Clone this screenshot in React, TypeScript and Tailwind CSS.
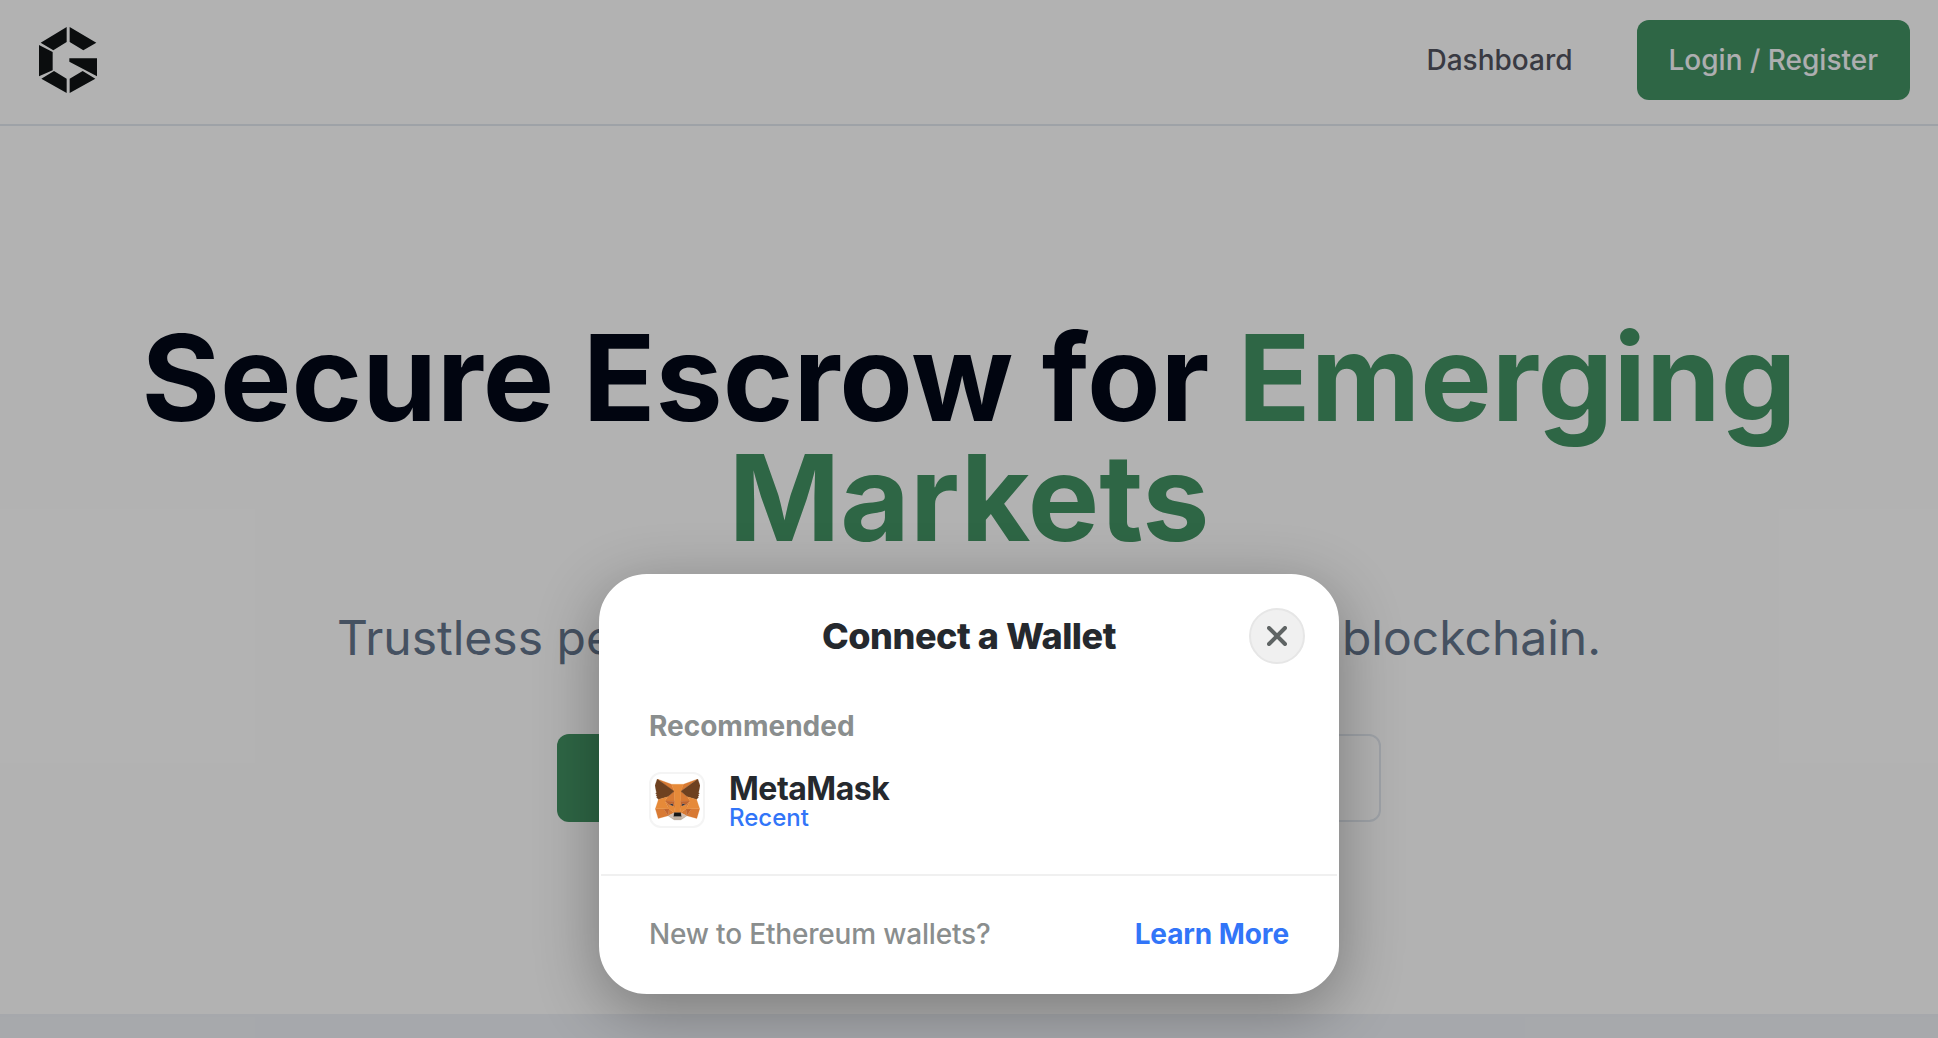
const FOX: [string, string][] = [
  ["#D87A32", "M32.958 1L19.824 10.718l2.442-5.727z"],
  ["#D87A34", "M2.663 1l13.016 9.809-2.32-5.818zM28.23 23.534l-3.495 5.338 7.483 2.06 2.143-7.282zM1.273 23.65l2.13 7.282 7.47-2.06-3.481-5.338zM10.47 14.515l-2.078 3.136 7.405.337-.247-7.97zM25.15 14.515l-5.157-4.588-.169 8.06 7.405-.336zM10.873 28.872l4.482-2.164-3.858-3.006zM20.266 26.708l4.469 2.164-.61-5.17z"],
  ["#D2BFB3", "M24.735 28.872l-4.47-2.164.365 2.903-.04 1.23zM10.873 28.872l4.157 1.97-.026-1.231.351-2.903z"],
  ["#273346", "M15.108 21.784l-3.715-1.088 2.624-1.205zM20.513 21.784l1.09-2.293 2.638 1.205z"],
  ["#C0652F", "M10.873 28.872l.65-5.338-4.131.116zM24.098 23.534l.637 5.338 3.494-5.222zM27.229 17.65l-7.405.338.689 3.796 1.09-2.293 2.638 1.205zM11.393 20.696l2.624-1.205 1.091 2.293.689-3.796-7.405-.337z"],
  ["#D87A34", "M8.392 17.65l3.105 6.052-.104-3.006zM24.241 20.696l-.117 3.006 3.105-6.051zM15.797 17.988l-.689 3.796.87 4.484.196-5.909zM19.824 17.988l-.364 2.358.182 5.922.87-4.484z"],
  ["#E68A39", "M20.513 21.784l-.87 4.484.623.44 3.858-3.006.117-3.006zM11.393 20.696l.104 3.006 3.858 3.006.624-.44-.87-4.484z"],
  ["#BDAD9F", "M20.59 30.842l.04-1.231-.338-.285h-4.963l-.325.285.026 1.23-4.157-1.969 1.455 1.192 2.95 2.035h5.053l2.962-2.035 1.442-1.192z"],
  ["#161616", "M20.266 26.708l-.624-.44h-3.663l-.624.44-.35 2.903.324-.285h4.963l.337.285z"],
  ["#6E4120", "M33.517 11.353l1.104-5.364L32.958 1 20.266 10.394l4.884 4.12 6.899 2.009 1.52-1.775-.663-.48 1.052-.958-.805-.622 1.052-.804zM1 5.989l1.117 5.364-.714.531 1.065.804-.805.622 1.052.958-.663.48 1.52 1.775 6.899-2.008 4.884-4.12L2.663 1z"],
  ["#E68A39", "M32.049 16.523l-6.899-2.008 2.079 3.136-3.105 6.05 4.105-.051h6.132zM10.47 14.515l-6.898 2.008-2.3 7.127h6.12l4.105.052-3.105-6.051zM19.824 17.988l.442-7.594 2-5.403h-8.911l2 5.403.442 7.594.169 2.384.013 5.896h3.663l.013-5.896z"],
];

function Logo() {
  return (
    <svg viewBox="0 0 174 198" className="h-[66px] w-[58px]" fill="#101415">
      <path d="M83 0V45L43 70L5 47ZM92 0L172 47L133 70L92 45ZM0 54L41 75V130L0 148ZM7 155L45 132L83 155V198ZM92 198V155L131 132L169 155ZM91 94H174V148L91 104Z" />
    </svg>
  );
}

function Fox() {
  return (
    <svg viewBox="1 1 33.6 31.9" className="h-[42px] w-[45px]" preserveAspectRatio="none">
      {FOX.map(([fill, d], i) => (
        <path key={i} d={d} fill={fill} stroke={fill} strokeWidth="0.2" />
      ))}
    </svg>
  );
}

function Header() {
  return (
    <header className="flex h-[126px] shrink-0 items-center justify-between border-b-2 border-[#e2e8f0] pr-7 pb-1 pl-[39px]">
      <Logo />
      <nav className="flex items-center gap-16 text-[28px] font-medium">
        <a className="text-[#52545f]">Dashboard</a>
        <button className="h-20 rounded-xl bg-[#439263] px-8 text-[#f8fafc]">Login / Register</button>
      </nav>
    </header>
  );
}

function Hero() {
  return (
    <main className="flex h-[888px] shrink-0 flex-col items-center pt-[192px] text-center">
      <h1 className="w-[1740px] text-[120px] leading-[120px] font-bold text-[#020817]">
        Secure Escrow for <span className="text-[#439263]">Emerging Markets</span>
      </h1>
      <p className="mt-12 text-[48px] leading-[64px] whitespace-nowrap text-[#64748b]">
        Trustless pe<span className="tracking-[-0.74px]">er-to-peer payments secured by </span>blockchain.
      </p>
      <div className="mt-16 flex w-[824px] gap-8 text-[28px] font-medium">
        <button className="h-[88px] flex-1 rounded-xl bg-[#439263] text-[#f8fafc]" aria-label="Get Started" />
        <button className="h-[88px] flex-1 rounded-xl border-2 border-[#e2e8f0] text-[#020817]" aria-label="Learn More" />
      </div>
    </main>
  );
}

function WalletDialog() {
  return (
    <div
      role="dialog"
      className="flex h-[420px] w-[740px] flex-col rounded-[48px] border-2 border-white bg-white text-[#25292e] shadow-[0_16px_64px_rgba(0,0,0,0.32)]"
    >
      <div className="mt-8 flex h-14 items-center justify-between px-8">
        <span className="w-14" />
        <h2 className="text-[36px] leading-none font-extrabold tracking-[-0.45px]">Connect a Wallet</h2>
        <button className="flex size-14 items-center justify-center rounded-full border-2 border-[#e6e6e6] bg-[#f0f0f0]">
          <svg viewBox="0 0 20 20" className="size-5" fill="none" stroke="#5f6464" strokeWidth="4" strokeLinecap="round">
            <path d="M2 2L18 18M18 2L2 18" />
          </svg>
        </button>
      </div>
      <div className="flex flex-1 flex-col px-12 pt-[44px]">
        <div className="text-[28px] leading-9 font-bold text-[#8a8e8e]">Recommended</div>
        <div className="mt-[25px] flex h-[62px] items-center gap-6">
          <div className="flex size-14 items-center justify-center rounded-xl border-2 border-[#f4f4f4]">
            <Fox />
          </div>
          <div>
            <div className="text-[32px] leading-9 font-bold tracking-[-0.5px]">MetaMask</div>
            <div className="-mt-px text-[24px] leading-[24px] font-medium text-[#3275f8]">Recent</div>
          </div>
        </div>
      </div>
      <div className="flex h-[118px] items-center justify-between border-t-2 border-[#f0f0f0] px-12 text-[28px]">
        <span className="font-medium tracking-[-0.18px] text-[#8a8e8e]">New to Ethereum wallets?</span>
        <a className="font-bold tracking-[-0.1px] text-[#3275f8]">Learn More</a>
      </div>
    </div>
  );
}

export default function App() {
  return (
    <div className="relative h-[1038px] w-[1938px] overflow-hidden bg-white font-['Inter',sans-serif]">
      <div className="flex h-full flex-col">
        <Header />
        <Hero />
        <section className="flex-1 bg-[#eef1f6]" />
      </div>
      <div className="absolute inset-0 flex items-end justify-center bg-black/30 pb-11">
        <WalletDialog />
      </div>
    </div>
  );
}
